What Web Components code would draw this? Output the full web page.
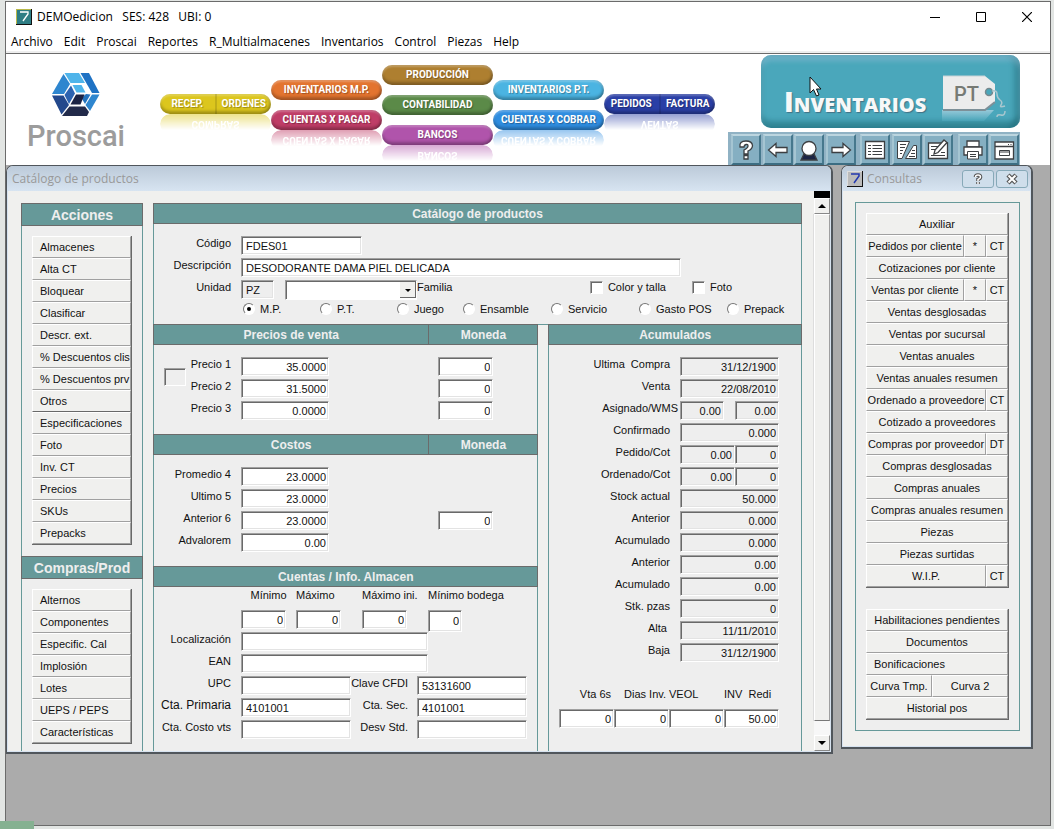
<!DOCTYPE html>
<html lang="es">
<head>
<meta charset="utf-8">
<title>DEMOedicion - Proscai</title>
<style>
  html { height: 100%; }
  body { margin: 0; min-height: 100%; background: #e2e5e3; font: 11px/14px "Liberation Sans", Arial, sans-serif; color: #111; }
</style>
</head>
<body>
<erp-app></erp-app>
<script>
const define = (name, css, html, setup) => customElements.define(name, class extends HTMLElement {
  constructor() {
    super();
    this.attachShadow({ mode: 'open' });
  }
  connectedCallback() {
    const body = typeof html === 'function' ? html(this) : html;
    this.shadowRoot.innerHTML = `<style>*{box-sizing:border-box}:host{display:block;box-sizing:border-box}${css}</style>${body}`;
    if (setup) setup(this);
  }
});

/* ---------- shared field styles ---------- */
const FIELD_CSS = `
  .row { display: flex; height: 22px; align-items: flex-start; }
  .row > label:first-child, .lead { width: 77px; margin-right: 10px; text-align: right; flex: none; white-space: pre; }
  label { line-height: 14px; white-space: pre; }
  input[type=text] { height: 19px; min-width: 0; border: 1px solid; border-color: #a0a0a0 #fff #fff #a0a0a0; border-radius: 0; outline: 0;
    box-shadow: inset 1px 1px 0 #696969, inset -1px -1px 0 #e3e3e3; background: #fff; font: inherit; color: inherit; padding: 0 3px 0 4px; }
  input.num { text-align: right; padding-right: 2px; }
  input[readonly] { background: #eee; }
`;
let uid = 0;
const box = (w, value = '', cls = '', label = '', ro = false) => {
  const id = 'f' + (++uid);
  return { id, html: `<input type="text" id="${id}" value="${value}" class="${cls}" style="width:${w}px"${label ? ` aria-label="${label}"` : ''}${ro ? ' readonly' : ''}>` };
};
const row = (label, w, value, cls, extra = '', ro = false) => {
  const f = box(w, value, cls, '', ro);
  return `<div class="row"><label for="${f.id}">${label}</label>${f.html}${extra}</div>`;
};

/* ---------- section heading ---------- */
define('section-bar', `
  :host { display: flex; background: #669999; border: 1px solid #6b6b6b; height: 21px; color: #eee; font-weight: bold; font-size: 12px; margin: 0 -1px; }
  :host([large]) { height: 23px; font-size: 14px; }
  h2 { font: inherit; margin: 0; flex: 1; display: flex; align-items: center; justify-content: center; }
  h2 + h2 { flex: 0 0 109px; border-left: 1px solid #6b6b6b; }
`, el => `<h2>${el.getAttribute('text')}</h2>${el.hasAttribute('second') ? `<h2>${el.getAttribute('second')}</h2>` : ''}`);

/* ---------- stack of flat buttons; cells split by | and rows by ; ---------- */
define('button-stack', `
  :host { border: solid; border-width: 0 1px 1px 0; border-color: #696969; }
  div { display: flex; height: 22px; }
  button { flex: 1; min-width: 0; overflow: hidden; white-space: pre; background: #f0f0ee; border: 1px solid; border-color: #fff #a0a0a0 #a0a0a0 #fff;
    border-radius: 0; font: inherit; color: inherit; padding: 0; text-align: center; }
  :host([left]) button, button.left { text-align: left; padding-left: 7px; }
  :host([left]) div:nth-of-type(8) button { border-bottom-color: #696969; }
  button.small { flex: 0 0 22px; }
  button.narrow { flex: 0 0 66px; }
`, el => el.getAttribute('rows').split(';').map(r => `<div>${r.split('|').map(c => {
  const cls = c.length < 3 ? 'small' : c === 'Curva Tmp.' ? 'narrow' : c === 'Bonificaciones' ? 'left' : '';
  return `<button type="button" class="${cls}">${c}</button>`;
}).join('')}</div>`).join(''));

/* ---------- inner window frame ---------- */
define('mdi-window', `
  :host { border: 1px solid #50565c; border-bottom-width: 2px; border-right-width: 2px; border-radius: 7px 7px 0 0; background: #f0f0ee; overflow: hidden; display: flex; flex-direction: column; }
  header { display: flex; align-items: center; height: 25px; padding: 0 3px 0 5px; background: linear-gradient(#bccad9, #d7e4f1); color: #999; font: 12px/16px "Open Sans", "Noto Sans", sans-serif; }
  h1 { font: inherit; margin: 0; flex: 1; }
  svg.seven { margin-right: 4px; flex: none; }
  header button { width: 32px; height: 18px; margin-left: 2px; padding: 0; border: 1px solid #87a9b8; border-radius: 3px; background: #cfdeeb; display: grid; place-items: center; }
  .body { border: solid #d7e3f0; border-width: 0 1px 1px; display: flex; flex: 1; }
  .body ::slotted(*) { flex: 1; min-width: 0; }
`, el => `<header>${el.hasAttribute('tool') ? `<svg class="seven" width="16" height="16"><path d="M0 0h16v16H0z" fill="#111"/><path d="M0 0h15v15H0z" fill="#ddd"/><path d="M1 1h14v14H1z" fill="#bbb"/><path d="M4 3h8v2L7 12" fill="none" stroke="#2338b0" stroke-width="1.5"/></svg>` : ''}
  <h1>${el.getAttribute('caption')}</h1>
  ${el.hasAttribute('tool') ? `<button type="button" aria-label="Ayuda"><svg width="12" height="12" viewBox="0 0 12 12"><path d="M3.5 4Q3.500 2 6 2t2.500 2Q8.500 5.500 6 6.500V8M6 9v2" fill="none" stroke="#555" stroke-width="3.600"/><path d="M3.500 4Q3.500 2 6 2t2.500 2Q8.500 5.500 6 6.500V8M6 9v2" fill="none" stroke="#fff" stroke-width="1.500"/></svg></button><button type="button" aria-label="Cerrar"><svg width="14" height="12" viewBox="0 0 14 12"><path d="M3 2l8 8M11 2l-8 8" stroke="#555" stroke-width="4.500"/><path d="M3.500 2.500l7 7M10.500 2.500l-7 7" stroke="#fff" stroke-width="2"/></svg></button>` : ''}
  </header><div class="body"><slot></slot></div>`);

/* ---------- product header form ---------- */
const radios = ['M.P.', 'P.T.', 'Juego', 'Ensamble', 'Servicio', 'Gasto POS', 'Prepack'];
define('product-form', FIELD_CSS + `
  :host { padding: 12px 0 0; height: 100px; }
  .combo { position: relative; display: flex; margin-left: 11px; }
  select { width: 132px; height: 20px; appearance: none; background: #fff; border: 1px solid; border-color: #a0a0a0 #fff #fff #a0a0a0; box-shadow: inset 1px 1px 0 #696969; border-radius: 0; font: inherit; }
  .combo svg { position: absolute; right: 1px; top: 2px; pointer-events: none; }
  .checks { display: flex; margin-left: auto; gap: 26px; padding-right: 69px; }
  .checks label, .radios label { display: flex; align-items: center; gap: 5px; }
  input[type=checkbox] { appearance: none; margin: 0; width: 13px; height: 13px; background: #fff; border: 1px solid; border-color: #a0a0a0 #fff #fff #a0a0a0; box-shadow: inset 1px 1px 0 #696969; }
  input[type=radio] { appearance: none; margin: 0; width: 12px; height: 12px; border-radius: 50%; background: #fff; border: 1px solid; border-color: #777 #fff #fff #777; display: grid; place-items: center; }
  input[type=radio]:checked::after { content: ""; width: 4px; height: 4px; border-radius: 50%; background: #000; }
  .radios { display: grid; grid-template-columns: 77px 77px 66px 88px 88px 88px 1fr; padding-left: 89px; }
`, () => {
  const pz = box(33, 'PZ', '', '', true);
  return row('Código', 121, 'FDES01', '') + row('Descripción', 440, 'DESODORANTE DAMA PIEL DELICADA', '') +
  `<div class="row"><label for="${pz.id}">Unidad</label>${pz.html}<span class="combo"><select id="fam"><option></option></select><svg width="16" height="16"><path d="M0 0h16v16H0z" fill="#696969"/><path d="M0 0h15v15H0z" fill="#f0f0ee"/><path d="M5 7h6L8 10z"/></svg></span><label for="fam">Familia</label>
   <div class="checks"><label><input type="checkbox">Color y talla</label><label><input type="checkbox">Foto</label></div></div>
   <div class="radios">${radios.map((r, i) => `<label><input type="radio" name="tipo"${i ? '' : ' checked'}>${r}</label>`).join('')}</div>`;
});

/* ---------- prices and costs ---------- */
const PRICE_CSS = FIELD_CSS + `
  :host { padding: 12px 44px 11px 0; }
  .row input + input { margin-left: auto; }
`;
const cash = (v, name) => v === undefined ? '' : box(55, v, 'num', 'Moneda ' + name).html;
define('sale-prices', PRICE_CSS + `
  :host { display: flex; }
  .rows { flex: 1; }
  .row > label:first-child { width: 45px; }
  .pick { appearance: none; flex: none; margin: 11px 0 0 10px; width: 22px; height: 18px; border: 1px solid; border-color: #a0a0a0 #fff #fff #a0a0a0; box-shadow: inset 1px 1px 0 #696969; }
`, () => `<input class="pick" type="checkbox" aria-label="Precios"><div class="rows">` +
  [['Precio 1', '35.0000'], ['Precio 2', '31.5000'], ['Precio 3', '0.0000']].map(([l, v]) => row(l, 88, v, 'num', cash('0', l))).join('') + `</div>`);
define('cost-list', PRICE_CSS, () =>
  [['Promedio 4', '23.0000'], ['Ultimo 5', '23.0000'], ['Anterior 6', '23.0000', '0'], ['Advalorem', '0.00']].map(([l, v, m]) => row(l, 88, v, 'num', cash(m, l))).join(''));

/* ---------- accounts ---------- */
define('account-form', FIELD_CSS + `
  :host { padding-top: 1px; }
  .limits { display: grid; grid-template-columns: 55px 66px 66px 1fr; padding-left: 87px; row-gap: 8px; height: 44px; }
  .limits label { justify-self: center; }
  .limits label.l { justify-self: start; }
  .limits input { grid-row: 2; }
  .limits input.tall { height: 22px; }
  .mid { width: 57px; margin-right: 9px; text-align: right; }
  .big { font-size: 12px; }
`, () => {
  const lim = [['Mínimo', 45, 'first'], ['Máximo', 45, 'l'], ['Máximo ini.', 45, 'l'], ['Mínimo bodega', 34, 'l']];
  const pair = (l, v, l2, v2) => {
    const b = box(110, v2);
    return row(l, 110, v, '', `<label class="mid" for="${b.id}">${l2}</label>${b.html}`);
  };
  return `<div class="limits">${lim.map(([l, w, c], i) => { const b = box(w, '0', 'num' + (i === 3 ? ' tall' : '')); return `<label class="${c}" for="${b.id}">${l}</label>${b.html}`; }).join('')}</div>` +
    row('Localización', 187, '', '') + row('EAN', 187, '', '') + pair('UPC', '', 'Clave CFDI', '53131600') +
    pair('<span class="big">Cta. Primaria</span>', '4101001', 'Cta. Sec.', '4101001') + pair('Cta. Costo vts', '', 'Desv Std.', '');
});

/* ---------- totals ---------- */
define('totals-form', FIELD_CSS + `
  :host { padding: 12px 22px 0 0; }
  .row { justify-content: flex-end; gap: 0; }
  .row > label:first-child { width: 100px; }
  .row.wide > label:first-child { margin-right: 2px; }
  .gap { margin-left: 11px; }
  .foot { display: grid; grid-template-columns: repeat(4, 55px); justify-content: end; row-gap: 8px; margin-top: 22px; }
  .foot input { grid-row: 2; }
  .foot .r { justify-self: end; padding-right: 3px; }
`, () => {
  const r = (l, v) => row(l, 99, v, 'num', '', true);
  const two = (l, w, v, w2, v2, cls) => row(l, w, v, 'num', `${cls ? '<span class="gap"></span>' : ''}${box(w2, v2, 'num', l + ' 2', true).html}`, true).replace('class="row"', `class="row ${cls || ''}"`);
  return r('Ultima  Compra', '31/12/1900') + r('Venta', '22/08/2010') + two('Asignado/WMS', 44, '0.00', 44, '0.00', 'wide') + r('Confirmado', '0.000') +
    two('Pedido/Cot', 55, '0.00', 44, '0') + two('Ordenado/Cot', 55, '0.00', 44, '0') + r('Stock actual', '50.000') + r('Anterior', '0.000') + r('Acumulado', '0.000') +
    r('Anterior', '0.00') + r('Acumulado', '0.00') + r('Stk. pzas', '0') + r('Alta ', '11/11/2010') + r('Baja', '31/12/1900') +
    `<div class="foot">${[['Vta 6s', '0', 'r'], ['Dias Inv.', '0', 'r'], ['VEOL', '0', ''], ['INV  Redi', '50.00', '']].map(([l, v, c]) => { const b = box(55, v, 'num'); return `<label class="${c}" for="${b.id}">${l}</label>${b.html}`; }).join('')}</div>`;
});

/* ---------- scroll strip ---------- */
define('scroll-strip', `
  :host { display: flex; flex-direction: column; width: 16px; }
  .cap { height: 7px; background: #000; }
  button { height: 16px; padding: 0; border: 1px solid; border-color: #fff #888 #888 #fff; background: #f0f0ee; display: grid; place-items: center; border-radius: 0; }
  .thumb { flex: 1; background: #f0f0ee; border: 1px solid; border-color: #fff #a0a0a0 #777 #fff; box-shadow: -1px 0 0 #ddd; }
  .track { height: 14px; background: #f7f7f7; }
`, `<div class="cap"></div><button type="button" aria-label="Subir"><svg width="8" height="4"><path d="M0 4l4-4 4 4z"/></svg></button><div class="thumb"></div><div class="track"></div><button type="button" aria-label="Bajar"><svg width="8" height="4"><path d="M0 0h8L4 4z"/></svg></button>`);

/* ---------- catalogue window content ---------- */
define('catalog-view', `
  :host { display: flex; }
  .side { width: 122px; margin: 12px 10px 0 13px; border: solid #669999; border-width: 0 1px; background: #eee; flex: none; }
  .side button-stack { margin: 10px 10px 11px; }
  .side button-stack:last-child { margin-bottom: 7px; }
  .main { flex: 1; margin: 12px 12px 0 0; min-width: 0; display: flex; flex-direction: column; }
  .top { border: solid #669999; border-width: 0 1px; background: #eee; }
  .cols { display: grid; grid-template-columns: 386fr 254fr; gap: 10px; border-top: 1px solid #669999; flex: 1; }
  .cols > div { border: solid #669999; border-width: 0 1px; background: #eee; margin-top: -1px; }
`, `<div class="side"><section-bar large text="Acciones"></section-bar>
  <button-stack left rows="Almacenes;Alta CT;Bloquear;Clasificar;Descr. ext.;% Descuentos clis;% Descuentos prv;Otros;Especificaciones;Foto;Inv. CT;Precios;SKUs;Prepacks"></button-stack>
  <section-bar large text="Compras/Prod"></section-bar>
  <button-stack left rows="Alternos;Componentes;Especific. Cal;Implosión;Lotes;UEPS / PEPS;Características"></button-stack></div>
  <div class="main"><div class="top"><section-bar text="Catálogo de productos"></section-bar><product-form></product-form></div>
  <div class="cols"><div><section-bar text="Precios de venta" second="Moneda"></section-bar><sale-prices></sale-prices>
  <section-bar text="Costos" second="Moneda"></section-bar><cost-list></cost-list>
  <section-bar text="Cuentas / Info. Almacen"></section-bar><account-form></account-form></div>
  <div><section-bar text="Acumulados"></section-bar><totals-form></totals-form></div></div></div>
  <scroll-strip></scroll-strip>`);

define('query-view', `
  :host { padding: 11px 10px 15px 12px; }
  .frame { border: 1px solid #669999; padding: 10px; background: #eee; display: grid; grid-template-columns: minmax(0, 1fr); gap: 21px; }
`, `<div class="frame"><button-stack rows="Auxiliar;Pedidos por cliente|*|CT;Cotizaciones por cliente;Ventas por cliente|*|CT;Ventas desglosadas;Ventas por sucursal;Ventas anuales;Ventas anuales resumen;Ordenado a proveedore|CT;Cotizado a proveedores;Compras por proveedor|DT;Compras desglosadas;Compras anuales;Compras anuales resumen;Piezas;Piezas surtidas;W.I.P.|CT"></button-stack>
  <button-stack rows="Habilitaciones pendientes;Documentos;Bonificaciones;Curva Tmp.|Curva 2;Historial pos"></button-stack></div>`);

/* ---------- header pieces ---------- */
define('proscai-logo', `
  :host { width: 98px; text-align: center; color: #9c9c9c; font: 500 29px/30px Roboto, "Open Sans", sans-serif; }
  svg { display: block; margin: 0 auto 5px; }
`, `<svg width="48" height="43" viewBox="0 0 48 43"><path d="M11.500 1L18 11l-6 10H0z" fill="#2e86cf"/><path d="M12.500 0H27l6 10H18.500z" fill="#4fb4ea"/><path d="M28.500 0H37l10.500 20H40z" fill="#1e72c4"/><path d="M47.500 21.500L38 38l-4.500-6L40 21.500z" fill="#2e86cf"/><path d="M0 22.500h11.500L17 32 9.500 41.500z" fill="#23488c"/><path d="M17.500 33.500H33L37 39l-2 4H10z" fill="#222a4a"/><path d="M19 12.500l4 8-6 10.500-4.500-9z" fill="#2b62b0"/><path d="M20.500 12h9l4 7.500h-9z" fill="#4fb4ea"/><path d="M34 21l4.500.5L33 31l-3.500-6z" fill="#2272bd"/><path d="M24 21.500h8.500L28.500 31.500h-10z" fill="#1b2344"/></svg>Proscai`);

define('flow-pill', `
  :host { color: #fff; font: bold 10px/20px Roboto, "Liberation Sans", sans-serif; text-align: center; }
  .pill, .echo { display: flex; height: 20px; border-radius: 10px; background: var(--c); overflow: hidden; }
  .pill { box-shadow: inset 0 2px 2px rgba(255,255,255,.25), inset 0 -3px 3px rgba(0,0,0,.25), inset -2px 0 2px rgba(0,0,0,.15); text-shadow: 1px 1px 1px rgba(0,0,0,.3); }
  a { flex: 1; color: inherit; text-decoration: none; white-space: nowrap; }
  a + a { border-left: 2px solid rgba(0,0,0,.12); }
  .echo { justify-content: center; transform: scaleY(-1); opacity: .5; -webkit-mask-image: linear-gradient(transparent 20%, #000); mask-image: linear-gradient(transparent 20%, #000); }
`, el => `<nav class="pill">${el.getAttribute('text').split('|').map(t => `<a href="#">${t}</a>`).join('')}</nav>${el.hasAttribute('echo') ? `<div class="echo" aria-hidden="true">${el.getAttribute('echo')}</div>` : ''}`);

define('flow-map', `
  :host { display: grid; grid-template-columns: repeat(5, 111px); height: 111px; }
  div { display: grid; grid-template-columns: minmax(0, 1fr); gap: 10px; align-content: start; }
  .a { padding-top: 40px; } .b { padding-top: 26px; } .c { padding-top: 11px; }
`, `<div class="a"><flow-pill style="--c:#dcc61d" text="RECEP.|ORDENES" echo="COMPRAS"></flow-pill></div>
  <div class="b"><flow-pill style="--c:#e3742f" text="INVENTARIOS M.P."></flow-pill><flow-pill style="--c:#bf3d67" text="CUENTAS X PAGAR" echo="CUENTAS X PAGAR"></flow-pill></div>
  <div class="c"><flow-pill style="--c:#ae7f30" text="PRODUCCIÓN"></flow-pill><flow-pill style="--c:#5b8a48" text="CONTABILIDAD"></flow-pill><flow-pill style="--c:#b054ab" text="BANCOS" echo="BANCOS"></flow-pill></div>
  <div class="b"><flow-pill style="--c:#4bb4e2" text="INVENTARIOS P.T."></flow-pill><flow-pill style="--c:#2f8de0" text="CUENTAS X COBRAR" echo="CUENTAS X COBRAR"></flow-pill></div>
  <div class="a"><flow-pill style="--c:#2a3fa6" text="PEDIDOS|FACTURA" echo="VENTAS"></flow-pill></div>`);

define('module-banner', `
  :host { position: relative; display: flex; height: 74px; width: 259px; border-radius: 10px; background: #4aa7bb; padding: 20px 12px 0 23px; color: #f6f8f8;
    box-shadow: inset 0 6px 5px rgba(150,190,215,.45), inset -6px 0 5px rgba(20,90,100,.35), inset 0 -7px 5px rgba(20,90,100,.4); }
  h1 { margin: 11px 0 0; flex: 1; font: 800 28px/30px "Open Sans", sans-serif; font-variant: small-caps; text-shadow: 1px 1px 1px rgba(60,60,80,.5); }
  .tag { flex: none; }
  .cursor { position: absolute; left: 48px; top: 21px; }
`, `<h1>Inventarios</h1><svg class="tag" width="66" height="48" viewBox="0 0 66 48"><defs><linearGradient id="g" x2="0" y2="1"><stop offset="0" stop-color="#c9dfec"/><stop offset="1" stop-color="#4aa7bb"/></linearGradient></defs>
  <path d="M0 35h42l10 0-10 11H0z" fill="url(#g)" opacity=".6"/><path d="M1 1h42l10 8v18l-10 8H1z" fill="#ececec"/><path d="M1 35h42l10-8" fill="none" stroke="#7d9098" stroke-width="2"/><path d="M1 1h42" stroke="#c6d2d6"/><circle cx="47" cy="17" r="3.500" fill="#4aa7bb" stroke="#77898e" stroke-width="1.500"/>
  <path d="M50 16q5-1 5 3t3 6 1 5 4 1M55 42q0-3 4-2t4-4" fill="none" stroke="#a9c7cf" stroke-width="1.500"/><text x="12" y="26" font-size="20" font-weight="500" font-family="Roboto, Liberation Sans, sans-serif" fill="#767a74">PT</text></svg>
  <svg class="cursor" width="13" height="22" viewBox="0 0 13 22"><path d="M1 1v16l3.500-3.500L7.500 20l2.500-1-2.500-6H12z" fill="#fff" stroke="#111"/></svg>`);

const icon = d => `<svg width="22" height="22" viewBox="0 0 22 22" fill="#fff" stroke="#3c3f42" stroke-width="1.300">${d}</svg>`;
const tools = [
  ['Ayuda', '<path d="M5 8Q4 2 11 2q6 0 6.500 4.500Q17.500 10 13 12v3H9v-4q4-2 4-4t-2-1.500Q9 6 9 8zM9 16.500h4V20H9z"/>'],
  ['Anterior', '<path d="M1.500 11L9 4.500v4h11v5H9v4z"/>'],
  ['Buscar', '<path d="M6 15h10l3 6H3z" fill="#1c2544"/><circle cx="11" cy="9.500" r="7"/>'],
  ['Siguiente', '<path d="M20.500 11L13 4.500v4H2v5h11v4z"/>'],
  ['Lista', '<path d="M1.500 2.500h19v17h-19z"/><path d="M4 6.500h3M8.500 6.500h9.500M4 9.500h3M8.500 9.500h9.500M4 12.500h3M8.500 12.500h9.500M4 15.500h3M8.500 15.500h9.500" stroke-width="1"/>'],
  ['Comparar', '<g stroke-width="1"><path d="M1.500 2.500h12L6 19.500H1.500z"/><path d="M17.500 6.500h3v13H9.500z"/><path d="M4 5.500h6M4 8.500h5M4 11.500h3M4 14.500h2M16 11.500h3M15 14.500h4M13 17.500h6"/></g>'],
  ['Editar', '<path d="M1.500 4h19v15.500h-19z"/><path d="M4 7.500h8M4 10.500h5M4 16.500h14M14 13.500h4" stroke-width="1"/><path d="M7 15l1-4L17 1l3 2.500-9 10z"/>'],
  ['Imprimir', '<path d="M5 8V2h12v6z"/><path d="M2 8h18v8H2z"/><path d="M5.500 12.500h11v7.500h-11zM8 15.500h6M8 17.500h6" stroke-width="1"/>'],
  ['Ventana', '<path d="M2 3h18.500v17H2zM2 7.500h18.500"/><path d="M6.500 11.500h10v5h-10zM7 13h9M15 5.500h1M17.500 5.500h1" stroke-width="1"/>']
];
define('tool-strip', `
  :host { display: flex; height: 33px; width: 292px; background: #90b2c4; padding: 2px 1px 0 3px; justify-content: space-between; }
  button { width: 30px; height: 31px; padding: 0; background: #85afc2; border: 2px solid; border-color: #bcd5df #46788d #3c6d82 #a5c5d2; display: grid; place-items: center; border-radius: 0; }
  .gap { margin-left: 3px; }
`, tools.map(([n, d], i) => `<button type="button" class="${[4, 7].includes(i) ? 'gap' : ''}" aria-label="${n}">${icon(d)}</button>`).join(''));

define('app-header', `
  :host { display: flex; background: #fff; height: 111px; padding: 0 30px 0 21px; }
  proscai-logo { margin: 19px 35px 0 0; }
  .right { margin-left: auto; display: flex; flex-direction: column; align-items: flex-end; gap: 4px; padding-top: 1px; }
`, `<proscai-logo></proscai-logo><flow-map></flow-map><div class="right"><module-banner></module-banner><tool-strip></tool-strip></div>`);

define('title-bar', `
  :host { display: flex; align-items: center; height: 30px; padding-left: 10px; background: #fff; font: 12px/16px "Open Sans", "Noto Sans", sans-serif; color: #000; }
  span { flex: 1; margin-left: 5px; white-space: pre; }
  button { width: 46px; height: 30px; padding: 0; border: 0; background: none; display: grid; place-items: center; }
`, `<svg width="16" height="16"><path d="M0 0h16v16H0z" fill="#111"/><path d="M0 0h15v15H0z" fill="#b8b84a"/><path d="M1 1h14v14H1z" fill="#2e7d84"/><path d="M4 3h8v2L7 12" fill="none" stroke="#fff" stroke-width="1.300"/></svg>
  <span>DEMOedicion   SES: 428   UBI: 0</span>
  <button type="button" aria-label="Minimizar"><svg width="10" height="10"><path d="M0 5.500h10" stroke="#000"/></svg></button>
  <button type="button" aria-label="Maximizar"><svg width="10" height="10"><path d="M.5.5h9v9h-9z" fill="none" stroke="#000"/></svg></button>
  <button type="button" aria-label="Cerrar"><svg width="10" height="10"><path d="M0 0l10 10M10 0L0 10" stroke="#000" stroke-width="1.200"/></svg></button>`);

define('menu-bar', `
  :host { display: flex; gap: 11px; height: 22px; padding: 0 5px; background: #fff; border-bottom: 1px solid #6b6b6b; box-shadow: inset 0 -2px 0 #eee; }
  button { border: 0; padding: 0; margin: 0; height: 20px; background: none; font: 12px/20px "Open Sans", "Noto Sans", sans-serif; color: #000; }
`, ['Archivo', 'Edit', 'Proscai', 'Reportes', 'R_Multialmacenes', 'Inventarios', 'Control', 'Piezas', 'Help'].map(t => `<button type="button">${t}</button>`).join(''));

define('erp-app', `
  :host { display: flex; flex-direction: column; min-height: 100vh; padding: 1px 3px 3px 5px; }
  .shell { flex: 1; display: flex; flex-direction: column; border: 1px solid #6b6b6b; background: #ababab; }
  .desk { flex: 1; display: flex; gap: 8px; align-items: flex-start; padding-right: 17px; }
  .desk > mdi-window:first-child { flex: 1; min-width: 0; }
  .desk > mdi-window:last-child { flex: 0 0 192px; }
  .status { position: fixed; left: 0; bottom: 0; width: 34px; height: 8px; background: #85b191; }
`, `<div class="shell"><title-bar></title-bar><menu-bar></menu-bar><app-header></app-header>
  <main class="desk"><mdi-window caption="Catálogo de productos"><catalog-view></catalog-view></mdi-window>
  <mdi-window tool caption="Consultas"><query-view></query-view></mdi-window></main></div><div class="status"></div>`);
</script>
</body>
</html>
